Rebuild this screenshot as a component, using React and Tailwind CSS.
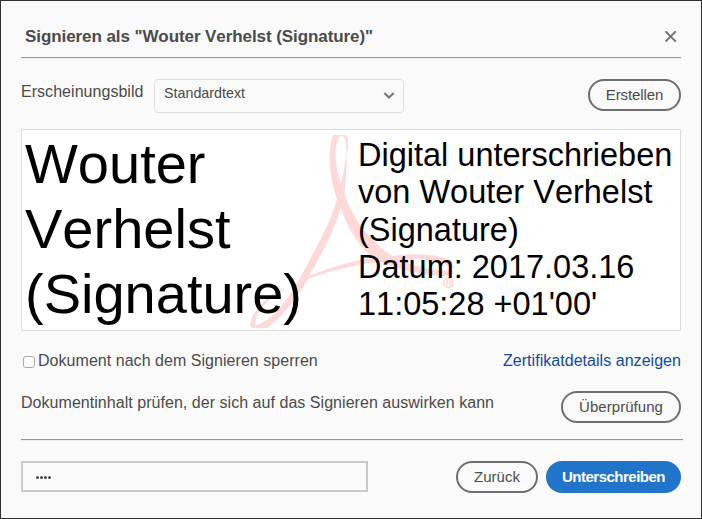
const outline =
  "flex h-8 items-center justify-center rounded-full border-2 border-[#6e6e6e] text-[15px] text-[#4b4b4b]";

function Watermark() {
  return (
    <svg className="absolute left-[218px] top-0 h-[200px] w-[220px]" viewBox="240 130 220 200" fill="none" stroke="#ffd0d0">
      <path
        fill="#ffd8d8"
        stroke="none"
        fillRule="evenodd"
        d="M334 135H346L348 138V150L346.500 152C347 166 346 180 344.500 193C348 206 355 218 362 228C372 240 382 250 393 256C408 253 433 254 445 258C452 261 455 266 453 269C450 266 444 263 435 261C425 259 411 259 402 260C415 267 431 270 444 270.500C449 270.500 450 270 452 269L453 273C448 277 439 276 430 275C410 272 394 268 381 262C357 264 332 270 308 279C299 295 282 318 267 328H252C248 325 251 317 258 308C267 297 276 291 286 288C276 294 265 303 259 312C255 319 254 325 257 325C267 323 281 308 291 293C301 277 308 263 315 250C324 233 333 215 337 199C330 180 328 157 331 143C332 138 332 136 334 135ZM339.500 137C334 144 334 163 341 184C345 166 347 154 346 143C345 137 342 134 339.500 137ZM341 208C334 230 322 254 309 276C332 267 354 260 373 258C358 245 347 227 341 208Z"
      />
      <circle cx="448.500" cy="282.700" r="4.700" strokeWidth="1.300" />
      <path d="M447 286V280H449.500C451.600 280 451.600 283 449.500 283H447M449 283L451 286" strokeWidth="1.200" />
    </svg>
  );
}

export default function App() {
  return (
    <div className="flex h-[519px] w-[702px] flex-col border border-[#322f32] bg-[#fafafa] pl-5 pr-5 font-['Liberation_Sans',Arial,sans-serif] text-base leading-5 text-[#4b4b4b] [font-kerning:none]">
      <header className="flex h-[56px] items-center justify-between pl-1 pr-1 pt-[15px]">
        <h1 className="text-[17px] font-bold tracking-[-0.08px]">Signieren als "Wouter Verhelst (Signature)"</h1>
        <svg className="h-3 w-3" viewBox="0 0 12 12" stroke="#757575" strokeWidth="2">
          <path d="M.5.3 10.800 10.600M10.800.3.5 10.600" />
        </svg>
      </header>
      <hr className="h-[2px] w-[660px] border-0 border-t border-[#969696] bg-[#efefef]" />

      <div className="mt-[20px] flex h-[34px] items-start">
        <label className="mt-[3px] w-[133px] tracking-[0.04px]">Erscheinungsbild</label>
        <button className="flex h-[34px] w-[250px] items-center justify-between rounded border border-[#e0e0e0] pl-[9px] pr-[8px] text-left text-[14.300px]">
          <span className="-mt-[6px]">Standardtext</span>
          <svg className="-mt-[2px] h-[7px] w-3" viewBox="0 0 12 7" fill="none" stroke="#747474" strokeWidth="2">
            <path d="M1.300 1 6 5.500 10.700 1" />
          </svg>
        </button>
        <button className={outline + " ml-auto w-[93px] tracking-[-0.1px]"}>Erstellen</button>
      </div>

      <section className="relative mt-[16px] flex h-[202px] w-[660px] shrink-0 border border-[#dbdbdb] bg-white text-black">
        <Watermark />
        <div className="relative w-[336px] pl-[3px] pt-px text-[56px] leading-[65px]">
          <div>Wouter</div>
          <div>Verhelst</div>
          <div>(Signature)</div>
        </div>
        <div className="relative whitespace-nowrap pt-[7px] text-[32.500px] leading-[37.300px]">
          <div>Digital unterschrieben</div>
          <div>von Wouter Verhelst</div>
          <div>(Signature)</div>
          <div>Datum: 2017.03.16</div>
          <div>11:05:28 +01'00'</div>
        </div>
      </section>

      <div className="mt-[20px] flex h-5 items-center justify-between tracking-[0.04px]">
        <label className="flex items-center">
          <span className="ml-[2px] mr-[3px] mt-[2px] h-3 w-3 rounded-[3px] border border-[#aaa] bg-white" />
          Dokument nach dem Signieren sperren
        </label>
        <a className="text-[#0d4ba0]">Zertifikatdetails anzeigen</a>
      </div>

      <div className="mt-[20px] flex h-8 items-start justify-between">
        <p className="mt-[2px] tracking-[0.04px]">Dokumentinhalt prüfen, der sich auf das Signieren auswirken kann</p>
        <button className={outline + " w-[120px] tracking-[0.05px]"}>Überprüfung</button>
      </div>
      <hr className="mt-[16px] h-[2px] w-[662px] border-0 border-t border-[#969696] bg-[#efefef]" />

      <footer className="mt-[20px] flex h-8 items-start">
        <div className="flex h-[31px] w-[347px] items-center gap-[1px] border-2 border-[#cacaca] pl-[13px] pt-px">
          {[0, 1, 2, 3].map((i) => (
            <span key={i} className="h-[3px] w-[3px] rounded-full bg-[#4b4b4b]" />
          ))}
        </div>
        <button className={outline + " ml-auto w-[82px]"}>Zurück</button>
        <button className="ml-2 h-8 w-[135px] rounded-full bg-[#2074ca] text-[15px] font-bold tracking-[-0.500px] text-white">
          Unterschreiben
        </button>
      </footer>
    </div>
  );
}
